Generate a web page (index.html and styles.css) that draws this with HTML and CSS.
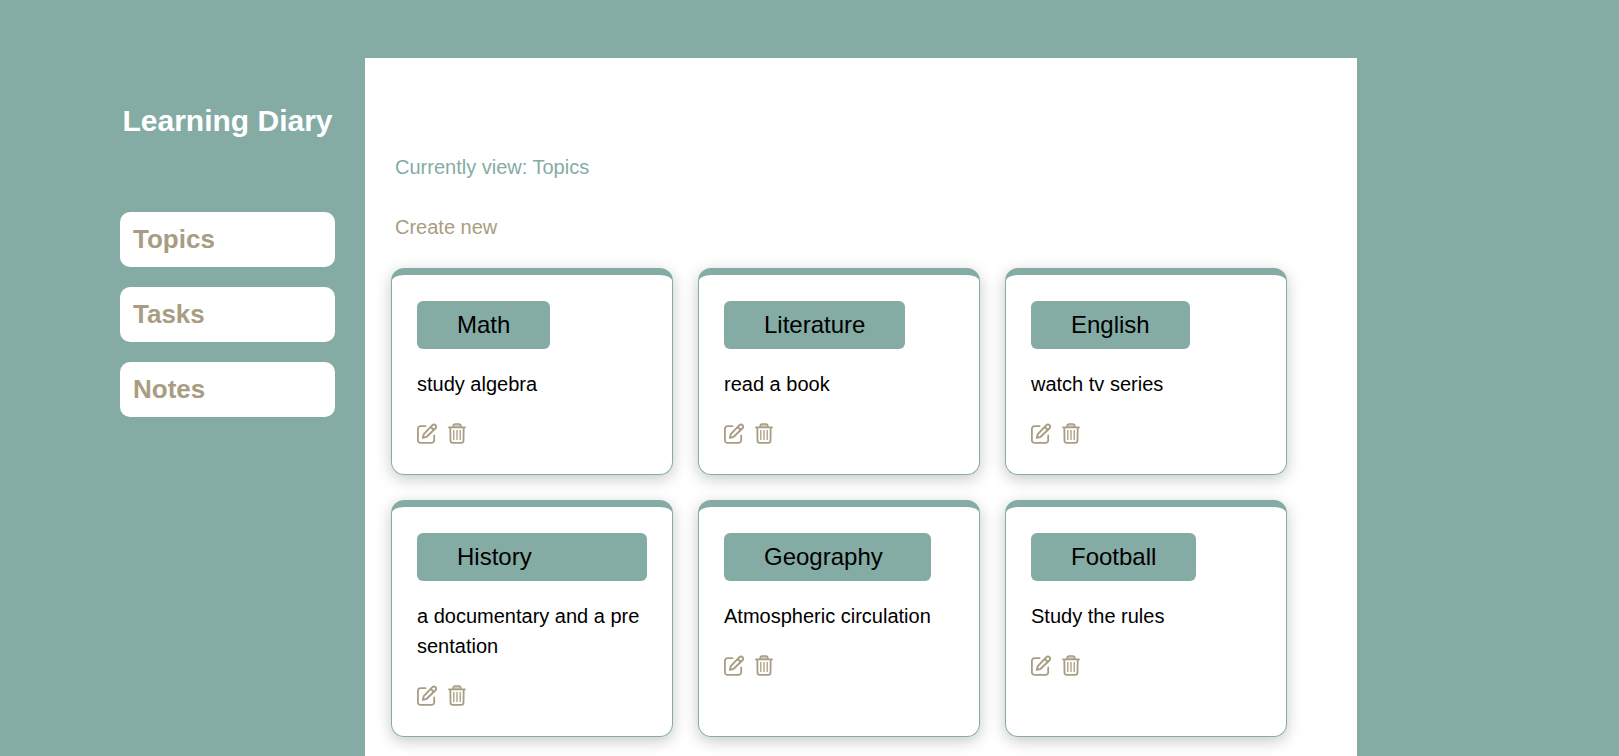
FILE: index.html
```
<!DOCTYPE html>
<html lang="en">
<head>
<meta charset="utf-8">
<title>Learning Diary</title>
<link rel="stylesheet" href="styles.css">
</head>
<body>
<svg class="sprite" aria-hidden="true">
  <symbol id="edit" viewBox="0 0 20 21">
    <path d="M8.5 3.2H3.6A2.7 2.7 0 0 0 .9 5.9v11.3a2.7 2.7 0 0 0 2.7 2.7h10.9a2.7 2.7 0 0 0 2.7-2.7V12.5" fill="none" stroke="currentColor" stroke-width="1.8" stroke-linecap="round"/>
    <path d="M5.8 14.9l1-3.8 8.6-9a2.1 2.1 0 0 1 3 0l.1.1a2.1 2.1 0 0 1 0 3l-8.8 8.6zM13.8 4l2.9 2.9" fill="none" stroke="currentColor" stroke-width="1.9" stroke-linejoin="round"/>
  </symbol>
  <symbol id="trash" viewBox="0 0 18 21">
    <path d="M5.2 4V3a2 2 0 0 1 2-2h3.6a2 2 0 0 1 2 2v1" fill="currentColor" fill-opacity=".5" stroke="currentColor" stroke-width="1.6"/>
    <path d="M1 4.3h16M2.3 4.3l.2 13.2a2.4 2.4 0 0 0 2.4 2.4h8.2a2.4 2.4 0 0 0 2.4-2.4l.2-13.2" fill="none" stroke="currentColor" stroke-width="1.8" stroke-linecap="round"/>
    <path d="M5.8 7.3v9.2M9 7.3v9.2M12.2 7.3v9.2" fill="none" stroke="currentColor" stroke-width="1.3" stroke-linecap="round"/>
  </symbol>
</svg>
<div class="page">
  <aside class="sidebar">
    <h1 class="brand">Learning Diary</h1>
    <nav class="nav">
      <a class="nav-link" href="#topics">Topics</a>
      <a class="nav-link" href="#tasks">Tasks</a>
      <a class="nav-link" href="#notes">Notes</a>
    </nav>
  </aside>
  <main class="panel">
    <p class="current">Currently view: Topics</p>
    <a class="create" href="#new">Create new</a>
    <div class="cards">
      <article class="card"><div class="card-body">
        <h2 class="card-title">Math</h2>
        <p class="card-text">study algebra</p>
        <div class="actions">
          <button class="action" aria-label="Edit"><svg class="icon-edit"><use href="#edit"/></svg></button>
          <button class="action" aria-label="Delete"><svg class="icon-trash"><use href="#trash"/></svg></button>
        </div>
      </div></article>
      <article class="card"><div class="card-body">
        <h2 class="card-title">Literature</h2>
        <p class="card-text">read a book</p>
        <div class="actions">
          <button class="action" aria-label="Edit"><svg class="icon-edit"><use href="#edit"/></svg></button>
          <button class="action" aria-label="Delete"><svg class="icon-trash"><use href="#trash"/></svg></button>
        </div>
      </div></article>
      <article class="card"><div class="card-body">
        <h2 class="card-title">English</h2>
        <p class="card-text">watch tv series</p>
        <div class="actions">
          <button class="action" aria-label="Edit"><svg class="icon-edit"><use href="#edit"/></svg></button>
          <button class="action" aria-label="Delete"><svg class="icon-trash"><use href="#trash"/></svg></button>
        </div>
      </div></article>
      <article class="card"><div class="card-body">
        <h2 class="card-title">History</h2>
        <p class="card-text">a documentary and a presentation</p>
        <div class="actions">
          <button class="action" aria-label="Edit"><svg class="icon-edit"><use href="#edit"/></svg></button>
          <button class="action" aria-label="Delete"><svg class="icon-trash"><use href="#trash"/></svg></button>
        </div>
      </div></article>
      <article class="card"><div class="card-body">
        <h2 class="card-title">Geography</h2>
        <p class="card-text">Atmospheric circulation</p>
        <div class="actions">
          <button class="action" aria-label="Edit"><svg class="icon-edit"><use href="#edit"/></svg></button>
          <button class="action" aria-label="Delete"><svg class="icon-trash"><use href="#trash"/></svg></button>
        </div>
      </div></article>
      <article class="card"><div class="card-body">
        <h2 class="card-title">Football</h2>
        <p class="card-text">Study the rules</p>
        <div class="actions">
          <button class="action" aria-label="Edit"><svg class="icon-edit"><use href="#edit"/></svg></button>
          <button class="action" aria-label="Delete"><svg class="icon-trash"><use href="#trash"/></svg></button>
        </div>
      </div></article>
    </div>
  </main>
</div>
</body>
</html>
```
FILE: styles.css
```
* {
  box-sizing: border-box;
}

body {
  margin: 0;
  background: #84aca4;
  color: #000;
  font: 20px/30px "Liberation Sans", Arial, sans-serif;
}

.sprite {
  display: none;
}

.page {
  display: flex;
  gap: 30px;
  min-height: 100vh;
  padding: 58px 262px 0 120px;
}

.sidebar {
  flex: 0 0 215px;
  padding-top: 42px;
}

.brand {
  margin: 0 0 70px;
  font-size: 30px;
  line-height: 42px;
  text-align: center;
  white-space: nowrap;
  color: #fff;
}

.nav {
  display: grid;
  gap: 20px;
}

.nav-link {
  padding: 12px 13px;
  border-radius: 10px;
  background: #fff;
  color: #a89d82;
  font-size: 26px;
  font-weight: bold;
  line-height: 31px;
  text-decoration: none;
}

.panel {
  flex: 1;
  padding: 94px 26px 0;
  background: #fff;
}

.current {
  margin: 0 4px 30px;
  color: #84aca4;
}

.create {
  display: inline-block;
  margin: 0 4px 26px;
  color: #a89d82;
  text-decoration: none;
  vertical-align: top;
}

.cards {
  display: grid;
  grid-template-columns: repeat(auto-fill, 282px);
  gap: 25px;
}

.card {
  padding: 26px 25px 27px;
  border: 1px solid #84aca4;
  border-top-width: 7px;
  border-radius: 13px;
  box-shadow: 0 4px 15px rgba(0, 0, 0, 0.22);
}

.card-body {
  display: grid;
  gap: 20px;
  width: fit-content;
}

.card-title {
  margin: 0;
  padding: 9px 40px;
  border-radius: 6px;
  background: #84aca4;
  font-size: 24px;
  font-weight: normal;
}

.card-text {
  margin: 0;
  word-break: break-all;
}

.actions {
  display: flex;
  gap: 11px;
  height: 28px;
  align-items: center;
}

.action {
  display: block;
  padding: 0;
  border: 0;
  background: none;
  color: #a89d82;
  cursor: pointer;
}

.icon-edit,
.icon-trash {
  display: block;
  width: 20px;
  height: 21px;
}

.icon-trash {
  width: 18px;
}
```
